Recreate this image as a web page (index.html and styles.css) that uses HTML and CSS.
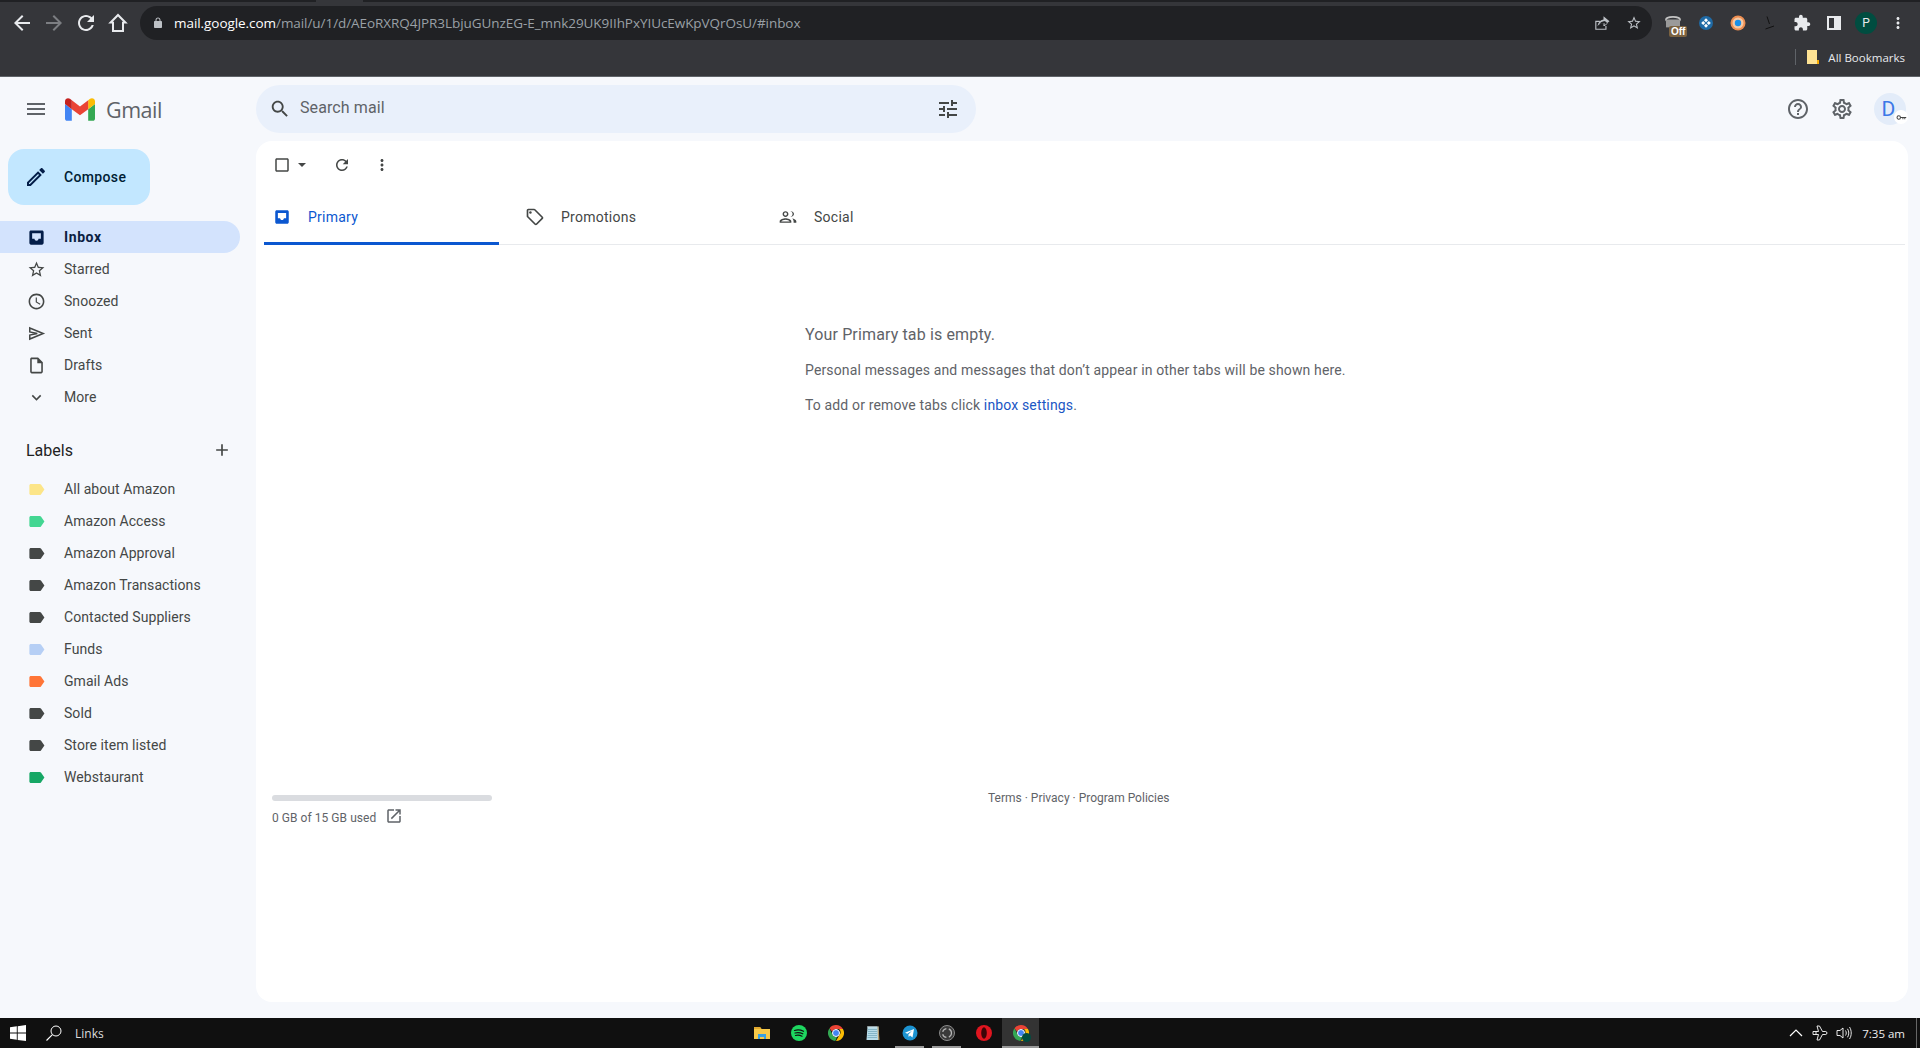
FILE: index.html
```html
<!DOCTYPE html>
<html lang="en">
<head>
    <meta charset="UTF-8">
    <title>Inbox - Gmail</title>
    <link rel="stylesheet" href="styles.css">
</head>
<body>
    <!-- icon sprite -->
    <svg class="sprite" xmlns="http://www.w3.org/2000/svg">
        <symbol id="i-back" viewBox="0 0 24 24"><path d="M20 11H7.83l5.59-5.59L12 4l-8 8 8 8 1.41-1.41L7.83 13H20v-2z"/></symbol>
        <symbol id="i-forward" viewBox="0 0 24 24"><path d="M4 11h12.17l-5.59-5.59L12 4l8 8-8 8-1.41-1.41L16.17 13H4v-2z"/></symbol>
        <symbol id="i-reload" viewBox="0 0 24 24"><path d="M17.65 6.35C16.2 4.9 14.21 4 12 4c-4.42 0-7.99 3.58-7.99 8s3.57 8 7.99 8c3.73 0 6.84-2.55 7.73-6h-2.08c-.82 2.33-3.04 4-5.65 4-3.31 0-6-2.69-6-6s2.69-6 6-6c1.66 0 3.14.69 4.22 1.78L13 11h7V4l-2.35 2.35z"/></symbol>
        <symbol id="i-home" viewBox="0 0 24 24"><path d="M12 2.6 2.2 12.4H6V21h12v-8.6h3.8L12 2.6zm0 3 5.2 5.2H16V19H8v-8.2H6.8L12 5.6z"/></symbol>
        <symbol id="i-lock" viewBox="0 0 24 24"><path d="M18 8h-1V6c0-2.76-2.24-5-5-5S7 3.24 7 6v2H6c-1.1 0-2 .9-2 2v10c0 1.1.9 2 2 2h12c1.1 0 2-.9 2-2V10c0-1.1-.9-2-2-2zM9 6c0-1.66 1.34-3 3-3s3 1.34 3 3v2H9V6z"/></symbol>
        <symbol id="i-share" viewBox="0 0 24 24"><path d="M3 9h6v1.5H4.500v9h12V16H18v5H3V9zm11-6 8 6.500-8 6.500v-3.700c-3.500 0-6 1-8 4 .5-4.800 3.300-8 8-9V3zm1.500 3.100v3.400l-1.200.2c-2.800.5-4.800 1.800-6 4 1.700-1 3.700-1.300 6-1.300h1.200v3.500l4.100-3.400-4.100-3.400z"/></symbol>
        <symbol id="i-star" viewBox="0 0 24 24"><path d="M22 9.24l-7.19-.62L12 2 9.19 8.63 2 9.24l5.46 4.73L5.82 21 12 17.27 18.18 21l-1.63-7.03L22 9.24zM12 15.4l-3.76 2.27 1-4.28-3.32-2.88 4.38-.38L12 6.1l1.71 4.04 4.38.38-3.32 2.88 1 4.28L12 15.4z"/></symbol>
        <symbol id="i-puzzle" viewBox="0 0 24 24"><path d="M20.5 11H19V7c0-1.1-.9-2-2-2h-4V3.5C13 2.12 11.88 1 10.5 1S8 2.12 8 3.5V5H4c-1.1 0-1.99.9-1.99 2v3.8H3.5c1.49 0 2.7 1.21 2.7 2.7s-1.21 2.7-2.7 2.7H2V20c0 1.1.9 2 2 2h3.8v-1.5c0-1.49 1.21-2.7 2.7-2.7 1.49 0 2.7 1.21 2.7 2.7V22H17c1.1 0 2-.9 2-2v-4h1.5c1.38 0 2.5-1.12 2.5-2.5S21.88 11 20.5 11z"/></symbol>
        <symbol id="i-more" viewBox="0 0 24 24"><path d="M12 8c1.1 0 2-.9 2-2s-.9-2-2-2-2 .9-2 2 .9 2 2 2zm0 2c-1.1 0-2 .9-2 2s.9 2 2 2 2-.9 2-2-.9-2-2-2zm0 6c-1.1 0-2 .9-2 2s.9 2 2 2 2-.9 2-2-.9-2-2-2z"/></symbol>
        <symbol id="i-menu" viewBox="0 0 24 24"><path d="M3 18h18v-2H3v2zm0-5h18v-2H3v2zm0-7v2h18V6H3z"/></symbol>
        <symbol id="i-search" viewBox="0 0 24 24"><path d="M15.5 14h-.79l-.28-.27C15.41 12.59 16 11.11 16 9.5 16 5.91 13.09 3 9.5 3S3 5.91 3 9.5 5.91 16 9.5 16c1.61 0 3.09-.59 4.23-1.57l.27.28v.79l5 4.99L20.49 19l-4.99-5zm-6 0C7.01 14 5 11.99 5 9.5S7.01 5 9.5 5 14 7.01 14 9.5 11.99 14 9.5 14z"/></symbol>
        <symbol id="i-tune" viewBox="0 0 24 24"><path d="M3 17v2h6v-2H3zM3 5v2h10V5H3zm10 16v-2h8v-2h-8v-2h-2v6h2zM7 9v2H3v2h4v2h2V9H7zm14 4v-2H11v2h10zm-6-4h2V7h4V5h-4V3h-2v6z"/></symbol>
        <symbol id="i-help" viewBox="0 0 24 24"><path d="M11 18h2v-2h-2v2zm1-16C6.48 2 2 6.48 2 12s4.48 10 10 10 10-4.48 10-10S17.52 2 12 2zm0 18c-4.41 0-8-3.59-8-8s3.59-8 8-8 8 3.59 8 8-3.59 8-8 8zm0-14c-2.21 0-4 1.79-4 4h2c0-1.1.9-2 2-2s2 .9 2 2c0 2-3 1.75-3 5h2c0-2.25 3-2.5 3-5 0-2.21-1.79-4-4-4z"/></symbol>
        <symbol id="i-settings" viewBox="0 0 24 24"><path d="M19.43 12.98c.04-.32.07-.64.07-.98 0-.34-.03-.66-.07-.98l2.11-1.65c.19-.15.24-.42.12-.64l-2-3.46c-.09-.16-.26-.25-.44-.25-.06 0-.12.01-.17.03l-2.49 1c-.52-.4-1.08-.73-1.69-.98l-.38-2.65C14.46 2.18 14.25 2 14 2h-4c-.25 0-.46.18-.49.42l-.38 2.65c-.61.25-1.17.59-1.69.98l-2.49-1c-.06-.02-.12-.03-.18-.03-.17 0-.34.09-.43.25l-2 3.46c-.13.22-.07.49.12.64l2.11 1.65c-.04.32-.07.65-.07.98 0 .33.03.66.07.98l-2.11 1.65c-.19.15-.24.42-.12.64l2 3.46c.09.16.26.25.44.25.06 0 .12-.01.17-.03l2.49-1c.52.4 1.08.73 1.69.98l.38 2.65c.03.24.24.42.49.42h4c.25 0 .46-.18.49-.42l.38-2.65c.61-.25 1.17-.59 1.69-.98l2.49 1c.06.02.12.03.18.03.17 0 .34-.09.43-.25l2-3.46c.12-.22.07-.49-.12-.64l-2.11-1.65zm-1.98-1.71c.04.31.05.52.05.73 0 .21-.02.43-.05.73l-.14 1.13.89.7 1.08.84-.7 1.21-1.27-.51-1.04-.42-.9.68c-.43.32-.84.56-1.25.73l-1.06.43-.16 1.13-.2 1.35h-1.4l-.19-1.35-.16-1.13-1.06-.43c-.43-.18-.83-.41-1.23-.71l-.91-.7-1.06.43-1.27.51-.7-1.21 1.08-.84.89-.7-.14-1.13c-.03-.31-.05-.54-.05-.74s.02-.43.05-.73l.14-1.13-.89-.7-1.08-.84.7-1.21 1.27.51 1.04.42.9-.68c.43-.32.84-.56 1.25-.73l1.06-.43.16-1.13.2-1.35h1.39l.19 1.35.16 1.13 1.06.43c.43.18.83.41 1.23.71l.91.7 1.06-.43 1.27-.51.7 1.21-1.07.85-.89.7.14 1.13zM12 8c-2.21 0-4 1.79-4 4s1.79 4 4 4 4-1.79 4-4-1.79-4-4-4zm0 6c-1.1 0-2-.9-2-2s.9-2 2-2 2 .9 2 2-.9 2-2 2z"/></symbol>
        <symbol id="i-edit" viewBox="0 0 24 24"><path d="M14.06 9.02l.92.92L5.92 19H5v-.92l9.06-9.06M17.66 3c-.25 0-.51.1-.7.29l-1.83 1.83 3.75 3.75 1.83-1.83c.39-.39.39-1.02 0-1.41l-2.34-2.34c-.2-.2-.45-.29-.71-.29zm-3.6 3.19L3 17.25V21h3.75L17.81 9.94l-3.75-3.75z"/></symbol>
        <symbol id="i-inbox" viewBox="0 0 24 24"><path fill-rule="evenodd" d="M19 3H5c-1.1 0-2 .9-2 2v14c0 1.1.9 2 2 2h14c1.1 0 2-.9 2-2V5c0-1.1-.9-2-2-2zm-1.5 10.5h-3c0 1.4-1.1 2.5-2.5 2.5s-2.5-1.1-2.5-2.5h-3v-7h11v7z"/></symbol>
        <symbol id="i-clock" viewBox="0 0 24 24"><path d="M11.99 2C6.47 2 2 6.48 2 12s4.47 10 9.99 10C17.52 22 22 17.52 22 12S17.52 2 11.99 2zM12 20c-4.42 0-8-3.58-8-8s3.58-8 8-8 8 3.58 8 8-3.58 8-8 8zm.5-13H11v6l5.25 3.15.75-1.23-4.5-2.67z"/></symbol>
        <symbol id="i-send" viewBox="0 0 24 24"><path d="M3.500 5 20.500 12 3.500 19V14L13 12 3.500 10Z" fill="none" stroke="#444746" stroke-width="1.9"/></symbol>
        <symbol id="i-draft" viewBox="0 0 24 24"><path d="M14 2H6c-1.1 0-1.99.9-1.99 2L4 20c0 1.1.89 2 1.99 2H18c1.1 0 2-.9 2-2V8l-6-6zM6 20V4h7v5h5v11H6z"/></symbol>
        <symbol id="i-expand" viewBox="0 0 24 24"><path d="M16.59 8.59L12 13.17 7.41 8.59 6 10l6 6 6-6z"/></symbol>
        <symbol id="i-add" viewBox="0 0 24 24"><path d="M19 13h-6v6h-2v-6H5v-2h6V5h2v6h6v2z"/></symbol>
        <symbol id="i-label" viewBox="0 0 24 24"><path d="M17.63 5.84C17.27 5.33 16.67 5 16 5L5 5.01C3.9 5.01 3 5.9 3 7v10c0 1.1.9 1.99 2 1.99L16 19c.67 0 1.27-.33 1.63-.84L22 12l-4.37-6.16z"/></symbol>
        <symbol id="i-check" viewBox="0 0 24 24"><path d="M19 5v14H5V5h14m0-2H5c-1.1 0-2 .9-2 2v14c0 1.1.9 2 2 2h14c1.1 0 2-.9 2-2V5c0-1.1-.9-2-2-2z"/></symbol>
        <symbol id="i-tag" viewBox="0 0 24 24"><path d="M21.41 11.58l-9-9C12.05 2.22 11.55 2 11 2H4c-1.1 0-2 .9-2 2v7c0 .55.22 1.05.59 1.42l9 9c.36.36.86.58 1.41.58.55 0 1.05-.22 1.41-.59l7-7c.37-.36.59-.86.59-1.41 0-.55-.23-1.06-.59-1.42zM13 20.01L4 11V4h7v-.01l9 9-7 7.02z"/><circle cx="6.5" cy="6.5" r="1.5"/></symbol>
        <symbol id="i-people" viewBox="0 0 24 24"><path d="M9 12c1.93 0 3.500-1.570 3.500-3.500S10.930 5 9 5 5.500 6.570 5.500 8.500 7.070 12 9 12zm0-5.300c1 0 1.800.8 1.800 1.800s-.8 1.800-1.800 1.800-1.800-.8-1.800-1.800.8-1.800 1.800-1.800zM9 13.500c-2.300 0-7 1.200-7 3.500V19h14v-2c0-2.300-4.700-3.500-7-3.500zm-5.200 3.800c.4-1 3.100-2.100 5.200-2.100s4.800 1.100 5.200 2.100H3.800zM15 5.200c1.500.4 2.500 1.700 2.500 3.300s-1 2.900-2.500 3.300c2 .2 4.200-1.200 4.200-3.300S17 5 15 5.200zM17 13.700c1 .7 1.700 1.900 1.700 3.300v2H22v-2c0-1.800-2.800-3-5-3.300z"/></symbol>
        <symbol id="i-open" viewBox="0 0 24 24"><path d="M19 19H5V5h7V3H5c-1.11 0-2 .9-2 2v14c0 1.1.89 2 2 2h14c1.1 0 2-.9 2-2v-7h-2v7zM14 3v2h3.59l-9.83 9.83 1.41 1.41L19 6.41V10h2V3h-7z"/></symbol>
        <symbol id="chrome-mark" viewBox="0 0 16 16">
            <path d="M8 0a8 8 0 0 1 6.93 4H8a4 4 0 0 0-3.800 2.800L1.500 3.300A8 8 0 0 1 8 0z" fill="#ea4335"/>
            <path d="M14.930 4A8 8 0 0 1 8 16l3.400-5.900A4 4 0 0 0 11 4z" fill="#fbbc04"/>
            <path d="M1.500 3.300 4.600 10A4 4 0 0 0 9 11.900L7.300 15.970A8 8 0 0 1 1.500 3.300z" fill="#34a853"/>
            <circle cx="8" cy="8" r="3.500" fill="#4285f4" stroke="#fff"/>
        </symbol>
    </svg>

    <!-- browser toolbar -->
    <div class="chrome">
        <div class="tabstrip"><span class="tab-edge tab-edge-left"></span><span class="tab-edge tab-edge-right"></span></div>
        <div class="nav-row">
            <svg class="nav-icon"><use href="#i-back"/></svg>
            <svg class="nav-icon nav-icon-off"><use href="#i-forward"/></svg>
            <svg class="nav-icon"><use href="#i-reload"/></svg>
            <svg class="nav-icon"><use href="#i-home"/></svg>
            <div class="omnibox">
                <svg class="omni-lock"><use href="#i-lock"/></svg>
                <span class="url"><span class="url-host">mail.google.com</span>/mail/u/1/d/AEoRXRQ4JPR3LbjuGUnzEG-E_mnk29UK9IIhPxYIUcEwKpVQrOsU/#inbox</span>
                <svg class="omni-icon omni-share"><use href="#i-share"/></svg>
                <svg class="omni-icon"><use href="#i-star"/></svg>
            </div>
            <div class="extensions">
                <span class="ext ext-off">
                    <svg class="ext-bucket" viewBox="0 0 18 16"><ellipse cx="9" cy="4" rx="8" ry="3" fill="none" stroke="#c4c4c4" stroke-width="2"/><path d="M1 4v9h16V4" fill="#9a9a9a"/></svg>
                    <span class="ext-badge">Off</span>
                </span>
                <span class="ext">
                    <svg class="ext-svg" viewBox="0 0 16 16"><circle cx="8" cy="8" r="7" fill="#1f6aa5"/><path d="M8 3.200 10 5.200 8 7.200 6 5.200zM8 8.800 10 10.800 8 12.800 6 10.800zM3.200 8 5.200 6 7.200 8 5.200 10zM8.800 8 10.800 6 12.800 8 10.800 10z" fill="#fff"/></svg>
                </span>
                <span class="ext">
                    <svg class="ext-svg" viewBox="0 0 16 16"><circle cx="8" cy="8" r="7.500" fill="#ee8f52"/><circle cx="8" cy="8" r="5.500" fill="#f6c9a4"/><circle cx="8" cy="8" r="3.200" fill="#1a8fe8"/></svg>
                </span>
                <span class="ext">
                    <svg class="ext-svg" viewBox="0 0 16 16"><path d="M5 1.500 7.500 9M3.500 14 12 11" fill="none" stroke="#111" stroke-width="1"/></svg>
                </span>
                <span class="ext"><svg class="tool-icon"><use href="#i-puzzle"/></svg></span>
                <span class="ext"><span class="side-panel"></span></span>
                <span class="ext"><span class="profile">P</span></span>
                <span class="ext"><svg class="tool-icon"><use href="#i-more"/></svg></span>
            </div>
        </div>
        <div class="bookmarks">
            <span class="bm-sep"></span>
            <svg class="bm-folder" viewBox="0 0 12 14"><path d="M0 0h10v10h2v4H0z" fill="#fde293"/><path d="M10 0v10h2z" fill="#35363a"/><path d="M10 10h2v4h-2z" fill="#f9ab00"/></svg>
            <span class="bm-text">All Bookmarks</span>
        </div>
    </div>

    <div class="gmail">
        <aside class="sidebar">
            <div class="brand">
                <svg class="burger"><use href="#i-menu"/></svg>
                <svg class="logo" viewBox="52 42 88 66">
                    <path fill="#4285f4" d="M58 108h14V74L52 59v43c0 3.32 2.69 6 6 6"/>
                    <path fill="#34a853" d="M120 108h14c3.32 0 6-2.69 6-6V59l-20 15"/>
                    <path fill="#fbbc04" d="M120 48v26l20-15v-8c0-7.42-8.47-11.65-14.4-7.2"/>
                    <path fill="#ea4335" d="M72 74V48l24 18 24-18v26L96 92"/>
                    <path fill="#c5221f" d="M52 51v8l20 15V48l-5.6-4.2c-5.94-4.45-14.4-.22-14.4 7.2"/>
                </svg>
                <span class="wordmark">Gmail</span>
            </div>
            <button class="compose"><svg class="compose-icon"><use href="#i-edit"/></svg>Compose</button>
            <nav class="folders">
                <a class="row row-active"><svg class="row-icon"><use href="#i-inbox"/></svg>Inbox</a>
                <a class="row"><svg class="row-icon"><use href="#i-star"/></svg>Starred</a>
                <a class="row"><svg class="row-icon"><use href="#i-clock"/></svg>Snoozed</a>
                <a class="row"><svg class="row-icon"><use href="#i-send"/></svg>Sent</a>
                <a class="row"><svg class="row-icon"><use href="#i-draft"/></svg>Drafts</a>
                <a class="row"><svg class="row-icon"><use href="#i-expand"/></svg>More</a>
            </nav>
            <div class="labels-head">
                <span>Labels</span>
                <svg class="labels-add"><use href="#i-add"/></svg>
            </div>
            <nav class="labels">
                <a class="row"><svg class="row-icon lb-yellow"><use href="#i-label"/></svg>All about Amazon</a>
                <a class="row"><svg class="row-icon lb-mint"><use href="#i-label"/></svg>Amazon Access</a>
                <a class="row"><svg class="row-icon lb-dark"><use href="#i-label"/></svg>Amazon Approval</a>
                <a class="row"><svg class="row-icon lb-dark"><use href="#i-label"/></svg>Amazon Transactions</a>
                <a class="row"><svg class="row-icon lb-dark"><use href="#i-label"/></svg>Contacted Suppliers</a>
                <a class="row"><svg class="row-icon lb-blue"><use href="#i-label"/></svg>Funds</a>
                <a class="row"><svg class="row-icon lb-orange"><use href="#i-label"/></svg>Gmail Ads</a>
                <a class="row"><svg class="row-icon lb-dark"><use href="#i-label"/></svg>Sold</a>
                <a class="row"><svg class="row-icon lb-dark"><use href="#i-label"/></svg>Store item listed</a>
                <a class="row"><svg class="row-icon lb-green"><use href="#i-label"/></svg>Webstaurant</a>
            </nav>
        </aside>

        <div class="content">
            <header class="topbar">
                <div class="searchbox">
                    <svg class="search-icon"><use href="#i-search"/></svg>
                    <span class="search-text">Search mail</span>
                    <svg class="tune-icon"><use href="#i-tune"/></svg>
                </div>
                <div class="account">
                    <svg class="account-icon"><use href="#i-help"/></svg>
                    <svg class="account-icon"><use href="#i-settings"/></svg>
                    <span class="avatar"><span class="avatar-letter">D</span><span class="avatar-key"><svg viewBox="0 0 14 8"><circle cx="3.5" cy="4" r="2.2" fill="none" stroke="#444" stroke-width="1.3"/><path d="M5.5 3.400H13v1.300h-1.200v1.500h-1.200V4.700H9.400v1.500H8.200V4.700H5.500z" fill="#444"/></svg></span></span>
                </div>
            </header>

            <main class="card">
                <div class="actions">
                    <svg class="act-check"><use href="#i-check"/></svg>
                    <span class="act-caret"></span>
                    <svg class="act-icon act-refresh"><use href="#i-reload"/></svg>
                    <svg class="act-icon act-more"><use href="#i-more"/></svg>
                </div>
                <div class="tabs">
                    <div class="tab tab-active"><svg class="tab-icon"><use href="#i-inbox"/></svg>Primary</div>
                    <div class="tab"><svg class="tab-icon"><use href="#i-tag"/></svg>Promotions</div>
                    <div class="tab"><svg class="tab-icon"><use href="#i-people"/></svg>Social</div>
                </div>
                <section class="empty">
                    <h2>Your Primary tab is empty.</h2>
                    <p>Personal messages and messages that don’t appear in other tabs will be shown here.</p>
                    <p>To add or remove tabs click <a>inbox settings</a>.</p>
                </section>
                <footer class="card-foot">
                    <div class="storage">
                        <div class="storage-bar"></div>
                        <div class="storage-text">0 GB of 15 GB used<svg class="storage-open"><use href="#i-open"/></svg></div>
                    </div>
                    <div class="policies">Terms · Privacy · Program Policies</div>
                </footer>
            </main>
        </div>
    </div>

    <!-- windows taskbar -->
    <div class="taskbar">
        <div class="task-left">
            <svg class="win-logo" viewBox="0 0 16 16"><path d="M0 2.300 6.800 1.300V7.600H0zM7.700 1.200 16 0V7.600H7.700zM0 8.400H6.800V14.800L0 13.800zM7.700 8.400H16V16L7.700 14.900z" fill="#fff"/></svg>
            <svg class="task-search" viewBox="0 0 16 16"><circle cx="10" cy="6" r="5" fill="none" stroke="#fff" stroke-width="1"/><path d="M6.400 9.600.5 15.500" stroke="#fff" stroke-width="1.100"/></svg>
            <span class="task-links">Links</span>
        </div>
        <div class="task-apps">
            <span class="app"><svg viewBox="0 0 16 16"><path d="M0 2h6l1.500 2H16v10H0z" fill="#f7c948"/><path d="M0 2h6l1.500 2H0z" fill="#e0a82e"/><path d="M4 9h8v5h-2v-2H6v2H4z" fill="#3aa0e0"/></svg></span>
            <span class="app"><svg viewBox="0 0 16 16"><circle cx="8" cy="8" r="8" fill="#1ed760"/><path d="M3.500 5.500c3-.9 6-.7 9 .8M4 8c2.600-.7 5.200-.5 7.800.8M4.500 10.500c2.200-.5 4.300-.4 6.500.7" fill="none" stroke="#111" stroke-width="1.200" stroke-linecap="round"/></svg></span>
            <span class="app"><svg viewBox="0 0 16 16"><use href="#chrome-mark"/></svg></span>
            <span class="app"><svg viewBox="0 0 16 16"><path d="M2.500 1.500h11L14 15H1.500z" fill="#b8dce8"/><path d="M13.500 1.500 14.500 15H13L12.500 1.500z" fill="#b59a6a"/><path d="M3 4.500h9M3 6.500h9M3 8.500h9M2.500 10.500h9.500M2.500 12.500h9.500" stroke="#6fa3b8" stroke-width=".7"/><path d="M3 1v1.500M5 1v1.500M7 1v1.500M9 1v1.500M11 1v1.500" stroke="#dfe8ea" stroke-width=".8"/></svg></span>
            <span class="app app-open"><svg viewBox="0 0 16 16"><circle cx="8" cy="8" r="7.500" fill="#1c93d1"/><path d="M3 7.800 12 4l-1.500 8.500-2.500-1.900-1.300 1.300-.3-2.500L10 5.800 5.300 8.700z" fill="#fff"/></svg></span>
            <span class="app app-open"><svg viewBox="0 0 16 16"><circle cx="8" cy="8" r="7.500" fill="#3a3a3a" stroke="#8a8a8a"/><circle cx="8" cy="8" r="4.500" fill="none" stroke="#b5b5b5" stroke-width="1.200" stroke-dasharray="5 2.500"/></svg></span>
            <span class="app"><svg viewBox="0 0 16 16"><ellipse cx="8" cy="8" rx="8" ry="8" fill="#e0151f"/><ellipse cx="8" cy="8" rx="2.800" ry="5.800" fill="#3a0508"/></svg></span>
            <span class="app app-open app-active"><svg viewBox="0 0 16 16"><use href="#chrome-mark"/></svg><span class="app-profile"></span></span>
        </div>
        <div class="tray">
            <svg class="tray-icon" viewBox="0 0 16 16"><path d="M2 11 8 5l6 6" fill="none" stroke="#fff" stroke-width="1.200"/></svg>
            <svg class="tray-icon" viewBox="0 0 16 16"><path d="M1 6.500h3V9.500H1zM4 6.500h2.500L5 1h2.500l3 5.500h3.300c1.500 0 1.500 3 0 3H10.500l-3 5.500H5l1.500-5.500H4" fill="none" stroke="#fff" stroke-width=".9"/></svg>
            <svg class="tray-icon" viewBox="0 0 16 16"><path d="M1 5.500h3L7 3v10L4 10.500H1zM9.500 5.500c1 1.500 1 3.500 0 5M11.500 3.800c1.700 2.500 1.700 6 0 8.500M13.500 2c2.300 3.500 2.300 8.500 0 12" fill="none" stroke="#fff" stroke-width=".9"/></svg>
            <span class="clock">7:35 am</span>
            <span class="show-desktop"></span>
        </div>
    </div>
</body>
</html>
```

FILE: styles.css
```css
* {
    box-sizing: border-box;
}

html, body {
    height: 100%;
}

body {
    margin: 0;
    display: flex;
    flex-direction: column;
    overflow: hidden;
    font-family: Roboto, "Noto Sans", sans-serif;
    font-size: 14px;
    color: #444746;
    background-color: #f6f8fc;
}

.sprite {
    position: absolute;
    width: 0;
    height: 0;
}

/* browser toolbar */
.chrome {
    height: 77px;
    flex-shrink: 0;
    background-color: #35363a;
    border-bottom: 1px solid #5f6368;
    color: #fff;
    font-family: "Open Sans", sans-serif;
}

.tabstrip {
    display: flex;
    justify-content: space-between;
    height: 2px;
}

.tab-edge {
    height: 2px;
    background-color: #202124;
}

.tab-edge-left {
    width: 316px;
}

.tab-edge-right {
    width: 1557px;
}

.nav-row {
    display: flex;
    align-items: center;
    height: 38px;
    margin-top: 2px;
    padding-left: 10px;
}

.nav-icon {
    width: 24px;
    height: 24px;
    margin-right: 8px;
    fill: #e8eaed;
}

.nav-icon-off {
    fill: #7c7e82;
}

.omnibox {
    display: flex;
    align-items: center;
    width: 1512px;
    height: 34px;
    margin-left: 2px;
    padding-left: 12px;
    border-radius: 17px;
    background-color: #202124;
}

.omni-lock {
    width: 12px;
    height: 12px;
    fill: #bdc1c6;
}

.url {
    flex: 1;
    margin-left: 10px;
    color: #9aa0a6;
    font-size: 13.5px;
    letter-spacing: -0.06px;
    white-space: nowrap;
}

.url-host {
    color: #fff;
}

.omni-icon {
    width: 16px;
    height: 16px;
    margin-right: 10px;
    fill: #bdc1c6;
}

.omni-share {
    width: 18px;
    height: 18px;
    margin-right: 15px;
}

.extensions {
    display: flex;
    align-items: center;
    margin-left: 6px;
}

.ext {
    position: relative;
    display: flex;
    align-items: center;
    justify-content: center;
    width: 32px;
    height: 32px;
}

.ext-bucket {
    width: 16px;
    height: 14px;
    margin: 0 2px 0 0;
}

.ext-badge {
    position: absolute;
    left: 11px;
    top: 19px;
    padding: 0 2px;
    border-radius: 2px;
    background-color: #7b6240;
    font-family: "Liberation Sans", sans-serif;
    font-size: 10px;
    font-weight: bold;
    line-height: 11px;
}

.ext-svg {
    width: 16px;
    height: 16px;
}

.tool-icon {
    width: 18px;
    height: 18px;
    fill: #e8eaed;
}

.side-panel {
    width: 14px;
    height: 14px;
    background-color: #35363a;
    border: 2px solid #e8eaed;
    border-right-width: 7px;
}

.profile {
    display: flex;
    align-items: center;
    justify-content: center;
    width: 22px;
    height: 22px;
    border-radius: 50%;
    background-color: #004d40;
    color: #e8eaed;
    font-family: Roboto, sans-serif;
    font-size: 12px;
}

.bookmarks {
    display: flex;
    align-items: center;
    justify-content: flex-end;
    height: 24px;
    margin-top: 3px;
    padding-right: 15px;
}

.bm-sep {
    width: 1px;
    height: 16px;
    margin-right: 11px;
    background-color: #5f6368;
}

.bm-folder {
    width: 12px;
    height: 14px;
    margin-right: 9px;
}

.bm-text {
    font-size: 11.5px;
    color: #e8eaed;
}

/* gmail */
.gmail {
    flex: 1;
    display: grid;
    grid-template-columns: 256px 1fr;
    min-height: 0;
}

.sidebar {
    display: flex;
    flex-direction: column;
}

.brand {
    display: flex;
    align-items: center;
    height: 64px;
    padding: 0 0 0 24px;
}

.burger {
    width: 24px;
    height: 24px;
    fill: #5f6368;
}

.logo {
    width: 30px;
    height: 23px;
    margin-left: 17px;
}

.wordmark {
    margin-left: 11px;
    font-family: "Open Sans", sans-serif;
    font-size: 21.5px;
    letter-spacing: -0.5px;
    color: #5f6368;
}

.compose {
    display: flex;
    align-items: center;
    width: 142px;
    height: 56px;
    margin: 8px 0 16px 8px;
    padding: 0 0 0 16px;
    border: none;
    border-radius: 16px;
    background-color: #c2e7ff;
    color: #001d35;
    font-family: inherit;
    font-size: 14px;
    font-weight: 500;
    letter-spacing: 0.35px;
}

.compose-icon {
    width: 24px;
    height: 24px;
    margin-right: 16px;
    fill: #041e49;
}

.row {
    display: flex;
    align-items: center;
    width: 240px;
    height: 32px;
    padding-left: 24px;
    border-radius: 0 16px 16px 0;
    color: #444746;
    letter-spacing: 0.06px;
    white-space: nowrap;
}

.row-active {
    background-color: #d3e3fd;
    color: #0b1e42;
    font-weight: 700;
    letter-spacing: 0.6px;
}

.row-icon {
    width: 19px;
    height: 19px;
    margin: 0 18.5px 0 2.5px;
    fill: #444746;
}

.row-active .row-icon {
    fill: #041e49;
}

.labels-head {
    display: flex;
    align-items: center;
    justify-content: space-between;
    height: 24px;
    margin-top: 25px;
    padding: 0 24px 0 26px;
    font-size: 16px;
    color: #1f1f1f;
}

.labels-add {
    width: 20px;
    height: 20px;
    fill: #444746;
}

.labels {
    margin-top: 11px;
}

.lb-yellow { fill: #fce588; }
.lb-mint { fill: #43d692; }
.lb-dark { fill: #444746; }
.lb-blue { fill: #b6cff5; }
.lb-orange { fill: #ff7537; }
.lb-green { fill: #16a765; }

.content {
    display: flex;
    flex-direction: column;
    min-width: 0;
}

.topbar {
    display: flex;
    align-items: center;
    justify-content: space-between;
    height: 64px;
    flex-shrink: 0;
    padding-right: 14px;
}

.searchbox {
    display: flex;
    align-items: center;
    width: 720px;
    height: 48px;
    padding: 0 16px 0 13px;
    border-radius: 24px;
    background-color: #e9f0fb;
}

.search-icon {
    width: 22px;
    height: 22px;
    fill: #444746;
}

.search-text {
    flex: 1;
    margin-left: 9px;
    margin-top: -4px;
    font-size: 16px;
    letter-spacing: 0.1px;
    color: #5f6368;
}

.tune-icon {
    width: 24px;
    height: 24px;
    fill: #444746;
}

.account {
    display: flex;
    align-items: center;
}

.account-icon {
    width: 24px;
    height: 24px;
    margin-right: 20px;
    fill: #5f6368;
}

.avatar {
    position: relative;
    display: flex;
    align-items: center;
    justify-content: center;
    width: 32px;
    height: 32px;
    border-radius: 50%;
    background-color: #e3ecf9;
    color: #3b78e7;
    font-size: 21px;
}

.avatar-letter {
    margin-right: 3px;
}

.avatar-key {
    position: absolute;
    right: -2px;
    bottom: 1px;
    display: flex;
    align-items: center;
    justify-content: center;
    width: 14px;
    height: 14px;
    border-radius: 50%;
    background-color: #fff;
}

.avatar-key svg {
    width: 11px;
    height: 7px;
}

.card {
    display: flex;
    flex-direction: column;
    height: 861px;
    margin-right: 12px;
    border-radius: 16px;
    background-color: #fff;
}

.actions {
    display: flex;
    align-items: center;
    height: 48px;
    padding-left: 17px;
}

.act-check {
    width: 18px;
    height: 18px;
    fill: #444746;
}

.act-caret {
    width: 0;
    height: 0;
    margin-left: 7px;
    border-left: 4px solid transparent;
    border-right: 4px solid transparent;
    border-top: 4px solid #444746;
}

.act-icon {
    width: 18px;
    height: 18px;
    fill: #444746;
}

.act-refresh {
    margin-left: 27px;
}

.act-more {
    margin-left: 22px;
}

.tabs {
    display: flex;
    height: 56px;
    margin: 0 3px 0 8px;
    border-bottom: 1px solid #e8eaed;
}

.tab {
    display: flex;
    align-items: center;
    width: 253px;
    height: 56px;
    padding: 0 0 0 8px;
    letter-spacing: 0.25px;
    color: #444746;
    font-size: 14px;
}

.tab-icon {
    width: 20px;
    height: 20px;
    margin-right: 16px;
    fill: #444746;
}

.tab-active {
    width: 235px;
    margin-right: 18px;
    padding-top: 3px;
    border-bottom: 3px solid #0b57d0;
    color: #0b57d0;
}

.tab-active .tab-icon {
    width: 18px;
    height: 18px;
    margin: 0 17px 0 1px;
    fill: #0b57d0;
}

.empty {
    flex: 1;
    padding: 78px 0 0 549px;
    color: #5f6368;
}

.empty h2 {
    margin: 0;
    font-size: 16px;
    font-weight: 400;
    line-height: 24px;
    letter-spacing: 0.14px;
}

.empty p {
    margin: 0;
    margin-top: 11px;
    line-height: 24px;
    letter-spacing: 0.145px;
}

.empty a {
    color: #1a56c4;
}

.card-foot {
    display: grid;
    grid-template-columns: 236px 1fr;
    height: 207px;
    padding-left: 16px;
}

.storage-bar {
    width: 220px;
    height: 6px;
    border-radius: 3px;
    background-color: #dadce0;
}

.storage-text {
    display: flex;
    align-items: center;
    margin-top: 10px;
    font-size: 12px;
    letter-spacing: 0.05px;
    color: #5f6368;
}

.storage-open {
    width: 18px;
    height: 18px;
    margin-left: 9px;
    margin-top: -4px;
    fill: #5f6368;
}

.policies {
    padding-left: 480px;
    margin-top: -5px;
    font-size: 12px;
    line-height: 16px;
    color: #5f6368;
}

/* windows taskbar */
.taskbar {
    display: flex;
    align-items: center;
    height: 30px;
    flex-shrink: 0;
    background-color: #101010;
    color: #ddd;
    font-family: "Open Sans", sans-serif;
}

.task-left {
    display: flex;
    align-items: center;
    width: 743px;
    padding-left: 10px;
}

.win-logo,
.task-search {
    width: 16px;
    height: 16px;
}

.task-search {
    margin-left: 20px;
}

.task-links {
    margin-left: 13px;
    font-size: 12px;
}

.task-apps {
    display: flex;
    height: 30px;
}

.app {
    position: relative;
    display: flex;
    align-items: center;
    justify-content: center;
    width: 37px;
    height: 30px;
}

.app svg {
    width: 16px;
    height: 16px;
}

.app-open::after {
    content: "";
    position: absolute;
    left: 4px;
    right: 4px;
    bottom: 0;
    height: 2px;
    background-color: #9a9a9a;
}

.app-active {
    background-color: #333;
}

.app-active::after {
    left: 0;
    right: 0;
}

.app-profile {
    position: absolute;
    left: 20px;
    top: 15px;
    width: 9px;
    height: 9px;
    border-radius: 50%;
    background-color: #004d40;
}

.tray {
    display: flex;
    align-items: center;
    height: 30px;
    margin-left: auto;
}

.tray-icon {
    width: 16px;
    height: 16px;
    margin-right: 8px;
}

.clock {
    margin-left: 2px;
    font-size: 11.5px;
    color: #eee;
}

.show-desktop {
    width: 1px;
    height: 30px;
    margin-left: 11px;
    margin-right: 3px;
    background-color: #666;
}
```
